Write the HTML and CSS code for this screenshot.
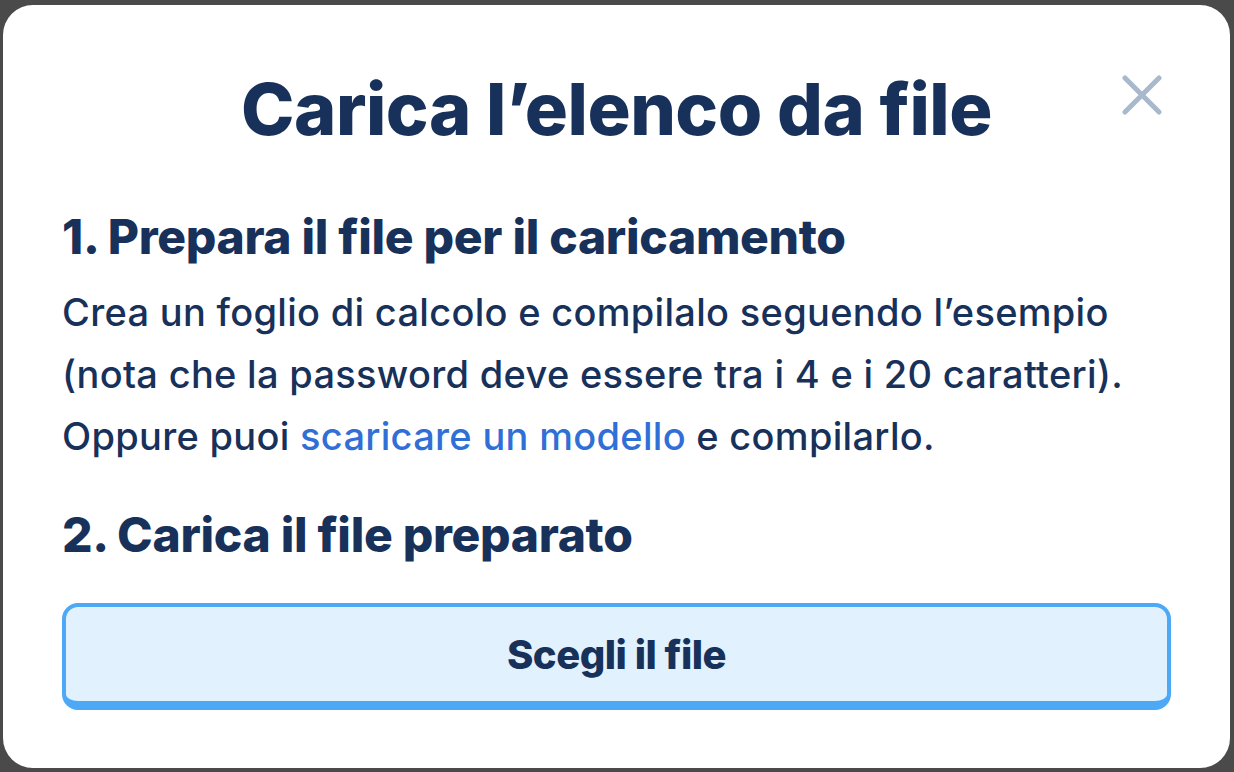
FILE: index.html
```html
<!DOCTYPE html>
<html lang="it">
<head>
<meta charset="utf-8">
<title>Carica l’elenco da file</title>
<link rel="stylesheet" href="styles.css">
</head>
<body>
<div class="modal">
  <button class="close" aria-label="Chiudi">
    <svg width="40" height="40" viewBox="0 0 40 40"><path d="M3 3 L37 37 M37 3 L3 37" stroke="#a9b9cd" stroke-width="5" stroke-linecap="round" fill="none"/></svg>
  </button>
  <h1 class="title">Carica l’elenco da file</h1>
  <h2 class="step">1. Prepara il file per il caricamento</h2>
  <p class="text">Crea un foglio di calcolo e compilalo seguendo l’esempio (nota che la password deve essere tra i 4 e i 20 caratteri). Oppure puoi <a href="#" class="link">scaricare un modello</a> e compilarlo.</p>
  <h2 class="step step-2">2. Carica il file preparato</h2>
  <button class="choose">Scegli il file</button>
</div>
</body>
</html>
```

FILE: styles.css
```css
html, body {
  margin: 0;
  padding: 0;
  background: #4a4a4a;
  height: 100%;
}
body {
  font-family: Inter, "Noto Sans", sans-serif;
  color: #17315a;
  padding: 5px 4px 4px 3px;
  box-sizing: border-box;
  display: flex;
}
.modal {
  position: relative;
  flex: 1;
  background: #fff;
  border-radius: 30px;
  padding: 0 59px;
  display: flex;
  flex-direction: column;
}
.close {
  position: absolute;
  top: 70px;
  right: 68px;
  background: none;
  border: 0;
  padding: 0;
  width: 40px;
  height: 40px;
}
.title {
  margin: 60px 0 0;
  text-align: center;
  font-size: 72px;
  font-weight: 800;
  line-height: 88px;
  letter-spacing: -0.5px;
}
.step {
  margin: 54px 0 0;
  font-size: 48px;
  font-weight: 800;
  line-height: 60px;
  letter-spacing: -0.3px;
}
.text {
  margin: 14px 0 0;
  font-size: 38px;
  font-weight: 500;
  line-height: 62px;
  letter-spacing: 0.3px;
}
.link {
  color: #2f6fd6;
  text-decoration: none;
}
.step-2 {
  margin-top: 38px;
}
.choose {
  margin-top: 38px;
  height: 107px;
  background: #e1f1fd;
  border: 4px solid #4da8f5;
  border-bottom-width: 9px;
  border-radius: 16px;
  font-family: inherit;
  font-size: 40px;
  font-weight: 800;
  letter-spacing: -0.5px;
  color: #17315a;
  padding: 0;
}
```
